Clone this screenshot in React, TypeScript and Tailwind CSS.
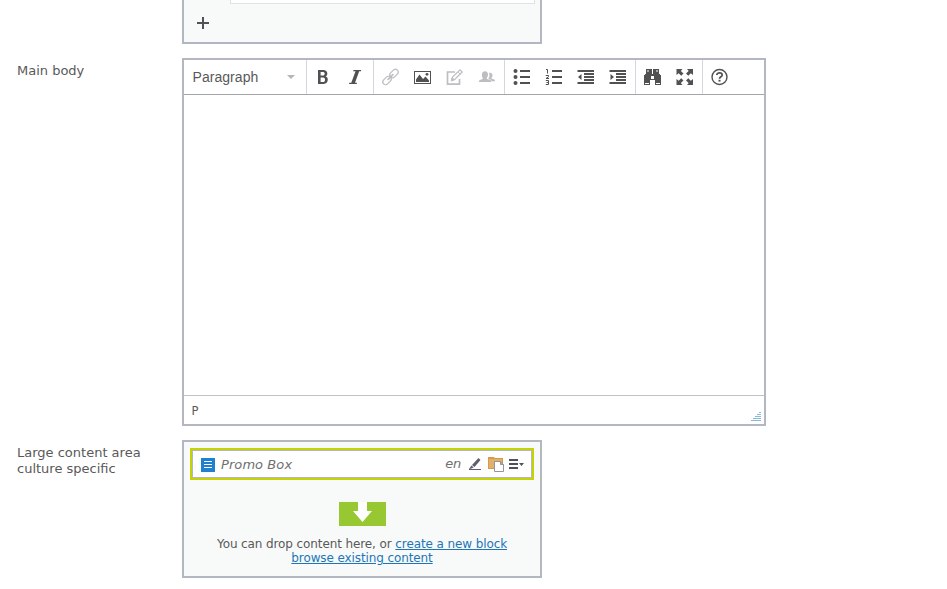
import type { ReactNode } from 'react';

const verdana = "font-['Verdana','DejaVu_Sans',sans-serif]";

function Cell({ children, muted = false }: { children: ReactNode; muted?: boolean }) {
  return (
    <button className={`flex h-[34px] w-8 items-center justify-center pl-[2px] ${muted ? 'text-[#bdbec1]' : 'text-[#515151]'}`}>
      {children}
    </button>
  );
}

function Group({ children, last = false }: { children: ReactNode; last?: boolean }) {
  return <div className={`flex ${last ? '' : 'border-r border-[#d5d7dc] pr-[2px]'}`}>{children}</div>;
}

function Icon({ children }: { children: ReactNode }) {
  return (
    <svg width="18" height="18" viewBox="0 0 18 18" fill="currentColor" className="shrink-0">
      {children}
    </svg>
  );
}

function Toolbar() {
  return (
    <div className="flex h-[35px] border-b border-[#a3a5a8]">
      <div className="flex w-[123px] items-center justify-between border-r border-[#d5d7dc] pr-[11px] pl-[8.5px] font-['Liberation_Sans',sans-serif] text-[14px] text-[#595959]">
        <span className="tracking-[0.050px]">Paragraph</span>
        <svg width="8" height="4" viewBox="0 0 8 4" fill="#b5b6b9"><path d="M0 0h8L4 4z" /></svg>
      </div>
      <Group>
        <Cell>
          <Icon><path fillRule="evenodd" d="M3 2h5.300c2.500 0 4 1.300 4 3.600 0 1.400-.6 2.400-1.600 2.900 1.300.4 2.100 1.500 2.100 3.100 0 2.800-1.600 4.400-4.300 4.400H3zm2.600 2v3.500h2.200c1.200 0 1.900-.6 1.900-1.800S9 4 7.800 4zm0 5.400V14h2.500c1.300 0 1.900-.8 1.900-2.300s-.7-2.300-1.900-2.300z" /></Icon>
        </Cell>
        <Cell>
          <Icon><path d="M6.500 2h7.700l-.3 1.200h-1.700L8 14.800h2l-.3 1.200H2l.3-1.200h2L8.500 3.200H6.200z" /></Icon>
        </Cell>
      </Group>
      <Group>
        <Cell muted>
          <Icon>
            <g transform="rotate(-45 8.500 9)" fill="none" stroke="currentColor" strokeWidth="1.300">
              <rect x="-1.200" y="6.200" width="9.500" height="5.600" rx="2.800" />
              <rect x="8.700" y="6.200" width="9.500" height="5.600" rx="2.800" />
              <path d="M4.500 9h8" strokeWidth="1.700" />
            </g>
          </Icon>
        </Cell>
        <Cell>
          <Icon>
            <path fillRule="evenodd" d="M0 3h17v13H0zm1 1v11h15V4z" />
            <path d="M2 14v-2.500L5.500 6.500 9 11l2.500-2.500 3.500 4V14z" /><circle cx="13" cy="6.300" r="1.400" />
          </Icon>
        </Cell>
        <Cell muted>
          <Icon>
            <path d="M9 4H1.500v12.200H13.500V11" fill="none" stroke="currentColor" strokeWidth="1.700" />
            <path d="M5.500 12.500l1-3.500 7.500-7.200 2.200 2.200-7.500 7.500z" fill="white" stroke="currentColor" strokeWidth="1.200" />
            <path d="M5.500 12.500l.8-2.700 2 2z" stroke="currentColor" /><path d="M12 4l2.200 2.200" stroke="currentColor" />
          </Icon>
        </Cell>
        <Cell muted>
          <Icon>
            <path d="M12 4.700c1.600 0 2.500 1.100 2.500 2.600 0 1.200-.4 2.100-1.100 2.600v.7l2.700 1c.6.300.9.700.9 1.600h-3.500c-.2-1.100-.8-1.600-2-2l-1.300-.5c.9-.9 1.300-1.900 1.300-3.500 0-.9-.2-1.600-.6-2.200.3-.2.700-.3 1.100-.3z" />
            <path d="M7 3.200c1.900 0 3 1.300 3 3.300 0 1.500-.5 2.600-1.300 3.300v.9l3.500 1.300c.7.300 1 .8 1 2H1c0-1.200.2-1.700.9-2l2.800-1.100V9.800C3.900 9.100 3.900 8 3.900 6.500c0-2 1.200-3.300 3.100-3.300z" />
          </Icon>
        </Cell>
      </Group>
      <Group>
        <Cell>
          <Icon>
            <circle cx="2.500" cy="3" r="2" /><circle cx="2.500" cy="9" r="2" /><circle cx="2.500" cy="15" r="2" />
            <path d="M7 2h10v2H7zM7 8h10v2H7zM7 14h10v2H7z" />
          </Icon>
        </Cell>
        <Cell>
          <Icon>
            <path d="M7 2h10v2H7zM7 8h10v2H7zM7 14h10v2H7z" />
            <path d="M1 1.500h1.500v4M.8 7.500h2.700v1.300L1 10.500h3M.8 12.500h2.700v4H.8M1.500 14.500h2" fill="none" stroke="currentColor" />
          </Icon>
        </Cell>
        <Cell>
          <Icon><path d="M.5 2H17v2H.5zM7 5h10v2H7zM7 8h10v2H7zM7 11h10v2H7zM.5 14H17v2H.5zM4.500 6v6L1 9z" /></Icon>
        </Cell>
        <Cell>
          <Icon><path d="M.5 2H17v2H.5zM7 5h10v2H7zM7 8h10v2H7zM7 11h10v2H7zM.5 14H17v2H.5zM1.500 6v6L5 9z" /></Icon>
        </Cell>
      </Group>
      <Group>
        <Cell>
          <Icon>
            <path fillRule="evenodd" d="M2 1h6v5h1V1h6v5h1v1h1v10h-6v-5H6v5H0V7h1V6h1zm1.500 1v2h1V2zm9 0v2h1V2zM7 8v3h3V8zM1 15v1h4v-1zm11 0v1h4v-1z" />
          </Icon>
        </Cell>
        <Cell>
          <Icon>
            <path d="M.5 1h6L4.800 3 7.500 5.600 5.200 7.800 2.700 5.200.5 7zM11 1h6v6l-2.200-1.800-2.500 2.600L10 5.600 12.700 3zM.5 11l2.200 1.800 2.500-2.600 2.300 2.200L4.800 15l1.700 2h-6zM17 11v6h-6l1.700-2L10 12.400l2.300-2.200 2.500 2.600z" />
          </Icon>
        </Cell>
      </Group>
      <Group last>
        <Cell>
          <Icon>
            <circle cx="8.500" cy="9" r="7.500" fill="none" stroke="currentColor" strokeWidth="1.400" />
            <path d="M5.800 7C5.800 4.200 11.200 4.200 11.200 7c0 1.800-2.700 1.800-2.700 3.800" fill="none" stroke="currentColor" strokeWidth="1.700" />
            <path d="M7.500 11.800h2v1.800h-2z" />
          </Icon>
        </Cell>
      </Group>
    </div>
  );
}

function Editor() {
  return (
    <div className="flex h-[368px] w-[584px] flex-col border-2 border-[#b2b7c1] bg-white">
      <Toolbar />
      <div className="flex-1" />
      <div className="flex h-[29px] items-end justify-between border-t border-[#c1c3c7] pr-[3px] pb-[2px] pl-[7.500px]">
        <span className={`${verdana} pb-[3.500px] text-[11.500px] leading-[16px] text-[#595959]`}>P</span>
        <svg width="10" height="10" viewBox="0 0 10 10" fill="#86b9dc">
          <path d="M8 0h2v1H8zM6 2h4v1H6zM4 4h6v1H4zM2 6h8v1H2zM0 8h10v1H0z" />
        </svg>
      </div>
    </div>
  );
}

function PromoItem() {
  return (
    <div className="h-8 border-2 border-[#c7d300]">
      <div className="flex h-7 items-center border border-[#b2b7c1] bg-white pr-[7px] pl-2 text-[#707070] italic">
        <svg width="14" height="14" viewBox="0 0 14 14" className="mt-[2px]">
          <path fill="#1d80d0" d="M0 0h14v14H0z" /><path fill="white" d="M3 3h8v1H3zM3 6h8v1H3zM3 9h8v1H3z" />
        </svg>
        <span className={`${verdana} mt-px ml-[6px] text-[13px] tracking-[0.080px]`}>Promo Box</span>
        <span className={`${verdana} ml-auto text-[13px] tracking-[-0.200px]`}>en</span>
        <svg width="14" height="14" viewBox="0 0 14 14" className="ml-[7px]">
          <path d="M10.500 1l2 2-6 7-2.500-2z" fill="#5f5c70" /><path d="M3.500 8.500l2.200 1.900L2 12H1z" fill="#5f5c70" /><path d="M1 12h12v1H1z" fill="#5f5c70" />
        </svg>
        <svg width="17" height="16" viewBox="0 0 17 16" className="ml-[6px]">
          <path fill="#d69a4c" d="M0 1h6l1 1h8v11H0z" /><path fill="#e3b06b" d="M1 3h13v9H1z" />
          <path fill="white" stroke="#93949e" d="M6.500 5.500h6l3 3v7h-9zM12.500 5.500v3h3" />
        </svg>
        <svg width="16" height="12" viewBox="0 0 16 12" className="ml-[4px] -mr-px">
          <path fill="#515058" d="M0 1h9v2H0zM0 5h9v2H0zM0 9h9v2H0zM10 5h5l-2.500 3z" />
        </svg>
      </div>
    </div>
  );
}

export default function App() {
  return (
    <main className={`${verdana} flex h-[589px] w-[947px] flex-col overflow-hidden bg-white text-[13px] leading-4 text-[#595959]`}>
      <section className="ml-[182px] h-11 w-[360px] border-x-2 border-b-2 border-[#b2b7c1] bg-[#f8faf9]">
        <div className="ml-[46px] h-1 w-[305px] border-x border-b border-[#e0e2e3] bg-white" />
        <svg width="12" height="12" viewBox="0 0 12 12" className="mt-[13px] ml-[13px]">
          <path fill="#515158" d="M5 0h2v5h5v2H7v5H5V7H0V5h5z" />
        </svg>
      </section>
      <section className="mt-[14px] flex">
        <div className="w-[182px] pt-[5px] pl-[17px]">Main body</div>
        <Editor />
      </section>
      <section className="mt-[14px] flex">
        <div className="w-[182px] pt-[5px] pl-[17px]">Large content area<br />culture specific</div>
        <div className="h-[138px] w-[360px] border-2 border-[#b2b7c1] bg-[#f8faf9] p-[6px]">
          <PromoItem />
          <div className="flex flex-col items-center pt-[22px]">
            <svg width="47" height="24" viewBox="0 0 47 24" className="ml-[1px]">
              <path fill="#97c831" d="M0 0h47v24H0z" /><path fill="white" d="M19 0h9v9h5L23.500 20 14 9h5z" />
            </svg>
            <div className="mt-[11px] text-center text-[12px] leading-[14px] tracking-[-0.105px] whitespace-nowrap">
              You can drop content here, or <a className="text-[#1d76b8] underline">create a new block</a><br />
              <a className="text-[#1d76b8] underline">browse existing content</a>
            </div>
          </div>
        </div>
      </section>
    </main>
  );
}
